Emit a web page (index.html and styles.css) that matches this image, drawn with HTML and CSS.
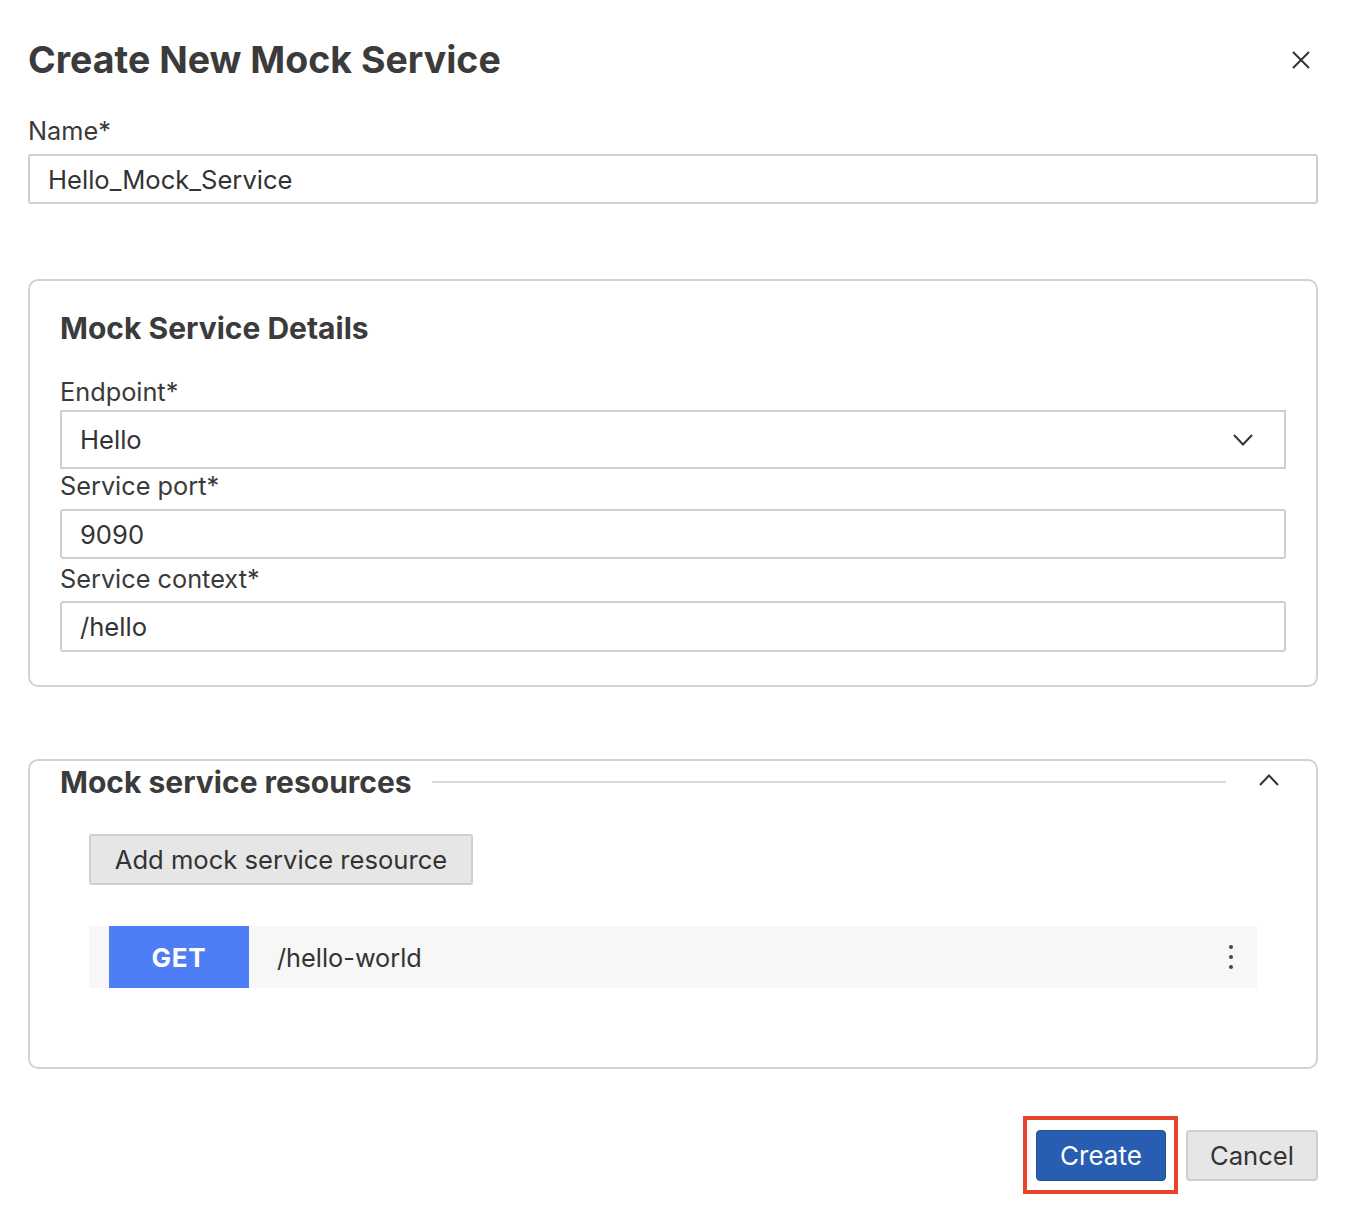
FILE: index.html
```html
<!DOCTYPE html>
<html>
<head>
<meta charset="utf-8">
<link rel="stylesheet" href="styles.css">
</head>
<body>
<div class="dialog">
  <div class="header">
    <h1 class="title">Create New Mock Service</h1>
    <button class="close" aria-label="Close">
      <svg width="18" height="18" viewBox="0 0 18 18"><path d="M1 1L17 17M17 1L1 17" stroke="#333" stroke-width="2" fill="none"/></svg>
    </button>
  </div>

  <label class="label label-name">Name*</label>
  <div class="input">Hello_Mock_Service</div>

  <section class="box details">
    <h2 class="box-title">Mock Service Details</h2>
    <label class="label label-endpoint">Endpoint*</label>
    <div class="select">
      <span>Hello</span>
      <svg class="chev" width="20" height="12" viewBox="0 0 20 12"><path d="M1 1L10 10.5L19 1" stroke="#333" stroke-width="2" fill="none"/></svg>
    </div>
    <label class="label label-port">Service port*</label>
    <div class="input input-port">9090</div>
    <label class="label label-context">Service context*</label>
    <div class="input input-context">/hello</div>
  </section>

  <section class="box resources">
    <div class="res-header">
      <h2 class="box-title">Mock service resources</h2>
      <div class="rule"></div>
      <svg class="chev-up" width="20" height="12" viewBox="0 0 20 12"><path d="M1 11L10 1.5L19 11" stroke="#333" stroke-width="2" fill="none"/></svg>
    </div>
    <div class="res-body">
      <button class="btn btn-add">Add mock service resource</button>
      <div class="res-row">
        <span class="method">GET</span>
        <span class="path">/hello-world</span>
        <span class="kebab"><i></i><i></i><i></i></span>
      </div>
    </div>
  </section>

  <div class="actions">
    <div class="create-wrap">
      <button class="btn btn-primary">Create</button>
      <span class="highlight"></span>
    </div>
    <button class="btn btn-cancel">Cancel</button>
  </div>
</div>
</body>
</html>
```

FILE: styles.css
```css
* { box-sizing: border-box; }
html, body { margin: 0; padding: 0; background: #fff; }
body {
  font-family: Inter, "Noto Sans", "Liberation Sans", sans-serif;
  color: #3a3a3a;
}
.dialog {
  padding: 37px 44px 33px 28px;
}
.header {
  display: flex;
  align-items: center;
  justify-content: space-between;
  height: 46px;
}
.title {
  margin: 0;
  font-size: 37.5px;
  font-weight: 700;
  line-height: 46px;
  color: #3b3b3b;
}
.close {
  border: 0;
  background: none;
  padding: 0;
  margin-right: 8px;
  width: 18px;
  height: 18px;
  display: flex;
}
.label {
  display: block;
  font-size: 25.3px;
  line-height: 30px;
  color: #3a3a3a;
}
.label-name { margin-top: 33px; }
.input {
  margin-top: 8px;
  height: 50px;
  border: 2px solid #cfcfcf;
  border-radius: 3px;
  padding: 0 18px;
  display: flex;
  align-items: center;
  font-size: 25.6px;
  color: #333;
}
.box {
  border: 2px solid #d2d2d2;
  border-radius: 10px;
  padding: 0 30px;
}
.details {
  margin-top: 75px;
  padding-top: 29px;
  padding-bottom: 33px;
}
.box-title {
  margin: 0;
  font-size: 30px;
  line-height: 36px;
  font-weight: 700;
  color: #3b3b3b;
}
.label-endpoint { margin-top: 31px; }
.select {
  margin-top: 3px;
  height: 59px;
  border: 2px solid #cfcfcf;
  padding: 0 31px 0 18px;
  display: flex;
  align-items: center;
  justify-content: space-between;
  font-size: 25.6px;
  color: #333;
}
.label-port { margin-top: 2px; }
.input-port { margin-top: 8px; }
.label-context { margin-top: 5px; }
.input-context { margin-top: 7px; height: 51px; }

.resources {
  margin-top: 72px;
  padding-top: 3px;
  padding-bottom: 79px;
}
.res-header {
  display: flex;
  align-items: center;
  height: 36px;
}
.rule {
  flex: 1;
  height: 2px;
  background: #d8d8d8;
  margin: 0 0 0 20px;
}
.chev-up {
  margin: -4px 7px 0 33px;
}
.res-body {
  padding: 0 29px;
}
.btn {
  font-family: inherit;
  font-size: 25.6px;
  border-radius: 4px;
  cursor: pointer;
}
.btn-add {
  margin-top: 34px;
  height: 51px;
  width: 384px;
  background: #e6e6e6;
  border: 2px solid #cfcfcf;
  border-radius: 3px;
  color: #333;
  padding: 0;
}
.res-row {
  margin-top: 41px;
  height: 62px;
  background: #f7f7f7;
  display: flex;
  align-items: center;
  padding-left: 20px;
}
.method {
  width: 140px;
  height: 62px;
  background: #4f7df5;
  color: #fff;
  font-weight: 700;
  font-size: 26px;
  letter-spacing: 0.8px;
  display: flex;
  align-items: center;
  justify-content: center;
}
.path {
  margin-left: 28px;
  flex: 1;
  font-size: 25.3px;
  color: #333;
}
.kebab {
  width: 4px;
  margin-right: 24px;
  display: flex;
  flex-direction: column;
  gap: 6px;
}
.kebab i {
  display: block;
  width: 4px;
  height: 4px;
  border-radius: 50%;
  background: #444;
}
.actions {
  margin-top: 61px;
  display: flex;
  justify-content: flex-end;
  gap: 20px;
}
.create-wrap {
  position: relative;
  display: flex;
}
.btn-primary {
  width: 130px;
  height: 51px;
  background: #285db2;
  border: 1px solid #21509c;
  color: #fff;
  padding: 0;
  font-size: 26px;
}
.btn-cancel {
  width: 132px;
  height: 51px;
  background: #e6e6e6;
  border: 2px solid #cfcfcf;
  color: #333;
  padding: 0;
}
.highlight {
  position: absolute;
  left: -13px;
  top: -14px;
  right: -12px;
  bottom: -13px;
  border: 4px solid #e8432d;
  pointer-events: none;
}
```
